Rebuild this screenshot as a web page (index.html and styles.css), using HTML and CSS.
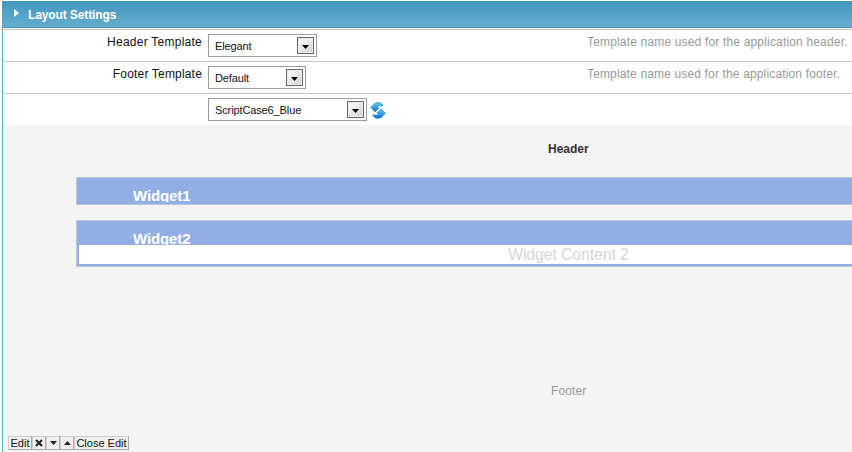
FILE: index.html
```html
<!DOCTYPE html>
<html lang="en">
<head>
<meta charset="utf-8">
<title>Layout Settings</title>
<link rel="stylesheet" href="styles.css">
</head>
<body>
<main class="panel">
  <header class="title">
    <svg class="marker" width="5" height="8" viewBox="0 0 5 8"><path d="M0 0L5 4L0 8Z" fill="#fff"/></svg>
    <span class="title-text">Layout Settings</span>
  </header>
  <div class="row">
    <span class="label header-label">Header Template</span>
    <div class="select elegant"><span class="value">Elegant</span><span class="drop"><svg width="7" height="4" viewBox="0 0 7 4"><path d="M0 0H7L3.5 4Z"/></svg></span></div>
    <span class="hint hint-header">Template name used for the application header.</span>
  </div>
  <div class="row">
    <span class="label footer-label">Footer Template</span>
    <div class="select default"><span class="value">Default</span><span class="drop"><svg width="7" height="4" viewBox="0 0 7 4"><path d="M0 0H7L3.5 4Z"/></svg></span></div>
    <span class="hint hint-footer">Template name used for the application footer.</span>
  </div>
  <div class="row">
    <span class="label"></span>
    <div class="select theme"><span class="value">ScriptCase6_Blue</span><span class="drop"><svg width="7" height="4" viewBox="0 0 7 4"><path d="M0 0H7L3.5 4Z"/></svg></span></div>
    <svg class="refresh" width="16" height="17" viewBox="0 0 16 17">
      <defs><linearGradient id="blue" x2="0" y2="1"><stop stop-color="#62cbf7"/><stop offset="1" stop-color="#0873cf"/></linearGradient></defs>
      <path d="M2.2 4.8C3.2 1.6 6.1.2 9 .6C10.6.8 12 1.6 12.9 3L11.6 4.4C9.8 3.2 7.8 3.6 7 5.4L9.3 5.7L5 10L.5 5.1Z" fill="url(#blue)" stroke="#238bd0" stroke-width=".6"/>
      <path d="M13.9 12.1C12.9 15.3 10 16.7 7.1 16.3C5.2 16 3.7 15 2.8 13.4L4.2 12.5C6 13.8 8.2 13.4 9.1 11.6L6.8 11.2L11.3 6.8L15.6 11.8Z" fill="url(#blue)" stroke="#1476c4" stroke-width=".6"/>
    </svg>
  </div>
  <section class="preview">
    <div class="page-header"><span>Header</span></div>
    <article class="widget first"><h2>Widget1</h2></article>
    <article class="widget second"><h2>Widget2</h2><div class="content"><span>Widget Content 2</span></div></article>
    <div class="page-footer"><span>Footer</span></div>
    <div class="toolbar">
      <span class="tool edit">Edit</span>
      <span class="tool"><svg width="8" height="8" viewBox="0 0 8 8"><path d="M1 1L7 7M7 1L1 7" stroke="#222" stroke-width="2.1"/></svg></span>
      <span class="tool"><svg width="7" height="4" viewBox="0 0 7 4"><path d="M0 0H7L3.5 4Z" fill="#222"/></svg></span>
      <span class="tool"><svg width="7" height="4" viewBox="0 0 7 4"><path d="M0 4H7L3.5 0Z" fill="#222"/></svg></span>
      <span class="tool close">Close Edit</span>
    </div>
  </section>
</main>
</body>
</html>
```
FILE: styles.css
```css
* { box-sizing: border-box; }
body { margin: 0; overflow: hidden; background: #fff; font: 12px/14px "Liberation Sans", Arial, sans-serif; color: #111; }
svg { display: block; flex: none; }
span { white-space: nowrap; }
.panel { width: 850px; height: 451px; margin: 1px 0 0 2px; border-left: 1px solid #62aac0; display: flex; flex-direction: column; }
.title { height: 27px; flex: none; margin-left: -1px; display: flex; align-items: flex-start; background: linear-gradient(#4199bd, #64add1); border-bottom: 1px solid #3f93b6; color: #fff; font-weight: bold; }
.marker { margin: 8px 0 0 12px; }
.title-text { margin: 7px 0 0 9px; letter-spacing: -.12px; }
.row { height: 32px; flex: none; border-top: 1px solid #c9c9c9; display: flex; align-items: flex-start; }
.title + .row { margin-top: 1px; }
.label { width: 199px; margin-top: 5px; text-align: right; flex: none; }
.header-label { letter-spacing: .25px; }
.footer-label { letter-spacing: .18px; }
.select { margin: 4px 0 0 6px; height: 23px; flex: none; border: 1px solid #9c9c9c; display: flex; justify-content: space-between; align-items: flex-start; padding: 2px 2px 0 6px; font-size: 11px; background: #fff; }
.elegant { width: 109px; }
.default { width: 98px; }
.theme { width: 159px; }
.value { margin-top: 2px; letter-spacing: -.12px; }
.drop { width: 17px; height: 17px; border: 1px solid #666; background: linear-gradient(135deg, #fff, #d0d0d0); box-shadow: inset 0 0 0 1px #eee; display: flex; align-items: center; justify-content: center; padding-top: 3px; }
.hint { margin-top: 5px; color: #999; }
.hint-header { margin-left: 270px; letter-spacing: .17px; }
.hint-footer { margin-left: 281px; letter-spacing: .15px; }
.refresh { margin: 8px 0 0 3px; }
.preview { flex: 1; background: #f4f4f4; display: flex; flex-direction: column; }
.page-header { height: 52px; flex: none; padding: 17px 0 0 545px; font-weight: bold; color: #333; }
.widget { margin-left: 73px; flex: none; border: 1px solid #b7c9d9; border-right: 0; background: #92aee5; overflow: hidden; }
.widget h2 { margin: 9px 0 0 56px; font-size: 15px; line-height: 17px; letter-spacing: -.1px; color: #fff; height: 15px; overflow: hidden; }
.first { height: 28px; }
.second { height: 47px; margin-top: 15px; }
.content { height: 19px; margin-left: 2px; background: #fff; color: #d6d6d6; font-size: 16px; line-height: 19px; letter-spacing: -.18px; padding-left: 429px; }
.page-footer { height: 169px; flex: none; padding: 117px 0 0 548px; color: #999; letter-spacing: .1px; }
.toolbar { display: flex; margin-left: 5px; height: 14px; }
.tool { height: 14px; width: 14px; flex: none; border: 1px solid #aaa; border-top-color: #ccc; border-left-color: #ccc; background: #f0f0f0; display: flex; align-items: center; justify-content: center; font-size: 11px; line-height: 12px; }
.edit { width: 24px; }
.close { width: 55px; }
```
